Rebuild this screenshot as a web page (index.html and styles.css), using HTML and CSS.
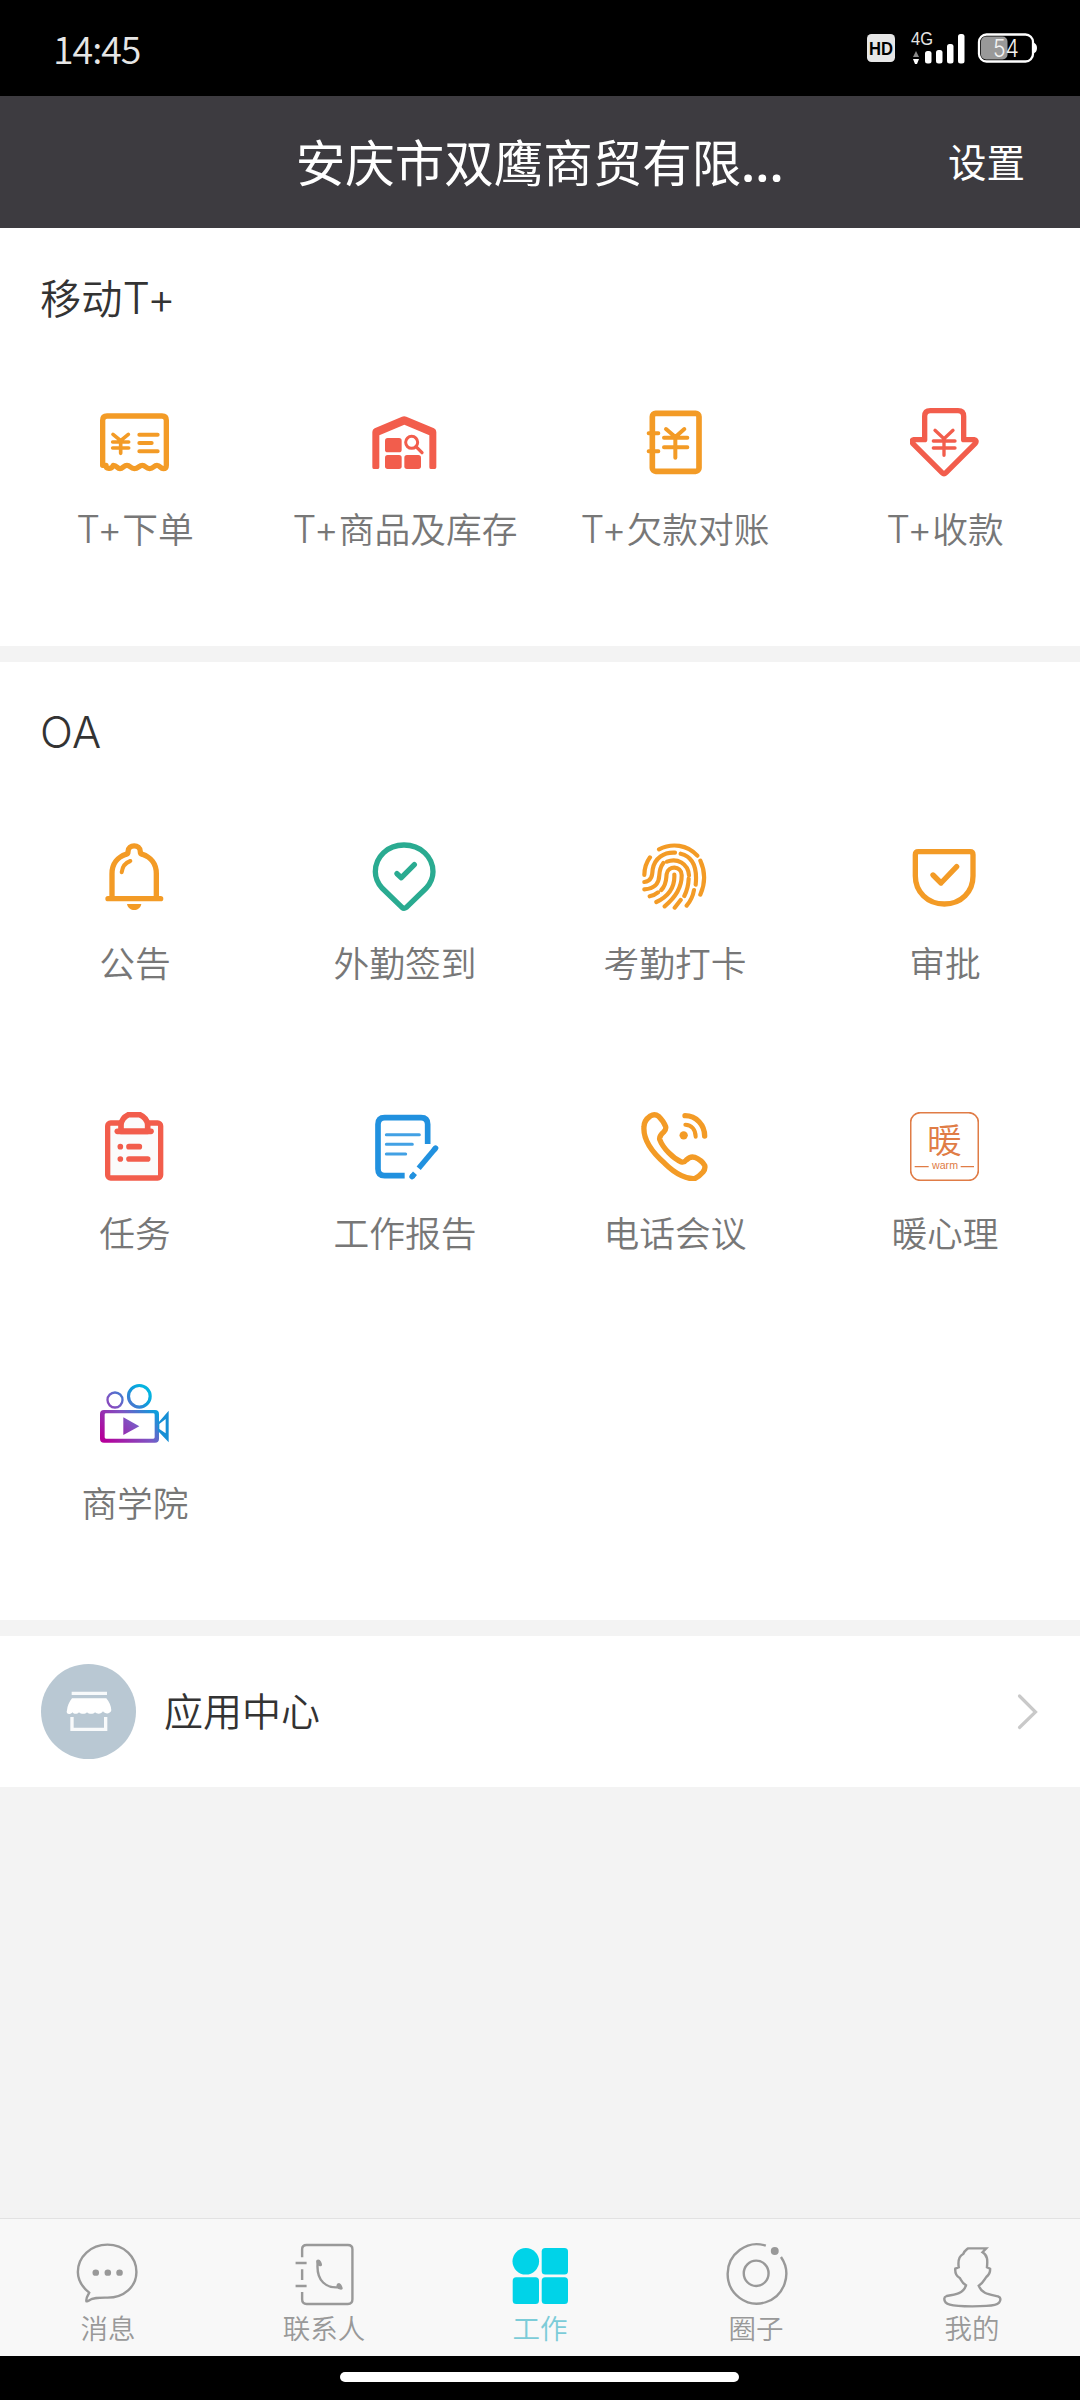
FILE: index.html
```html
<!DOCTYPE html>
<html lang="zh-CN">
<head>
<meta charset="utf-8">
<title>工作</title>
<link rel="stylesheet" href="styles.css">
</head>
<body>
<div class="status">
  <span class="time">14:45</span>
  <div class="status-icons">
    <svg class="hd" width="28" height="28" viewBox="0 0 28 28"><rect width="28" height="28" rx="4.500" fill="#e6e6e6"/><text x="14" y="21" text-anchor="middle" textLength="24" lengthAdjust="spacingAndGlyphs" class="hd-text">HD</text></svg>
    <svg class="signal" width="58" height="36" viewBox="0 0 58 36"><text x="2" y="15" textLength="22" lengthAdjust="spacingAndGlyphs" class="net-text">4G</text><path d="M4 27l3-6 3 6z" fill="#888"/><path d="M4 29h6l-2 5h-2z" fill="#fff"/><g fill="#fff"><rect x="16" y="21" width="6.500" height="12.500" rx="2.500"/><rect x="27" y="20" width="6.500" height="13.500" rx="2.500"/><rect x="38" y="14" width="6.500" height="19.500" rx="2.500"/><rect x="49" y="4" width="6.500" height="29.500" rx="2.500"/></g></svg>
    <svg width="64" height="32" viewBox="0 0 64 32"><rect x="5" y="4.500" width="26.500" height="23" rx="5" fill="#999"/><rect x="3" y="2.500" width="54" height="27" rx="7.500" fill="none" stroke="#fff" stroke-width="2.300"/><path d="M57 10.500q4 1 4 5.500t-4 5.500z" fill="#fff"/><text x="17" y="25" textLength="26" lengthAdjust="spacingAndGlyphs" class="bat-text">54</text></svg>
  </div>
</div>
<header class="header">
  <span></span>
  <h1>安庆市双鹰商贸有限<span class="dots">...</span></h1>
  <span class="settings">设置</span>
</header>

<main class="main">
<section class="group group-first">
  <h2>移动<span class="lat">T+</span></h2>
  <div class="grid">
    <div class="cell">
      <svg class="icon orange" viewBox="120 84 207 207"><path d="M128 256V121q0-13 13-13h165q13 0 13 13v135q0 10-9 10c-9 0-9-10-19-10s-10 10-22 10-12-10-22-10-12 10-24 10-12-10-22-10-12 10-21 10-9-10-20-10q-5 10-14 9-8 0-8-9z" stroke-width="16"/><path d="M159 163l23 19 23-19M182 182v38M158 186h48M158 204h48" stroke-width="11"/><path d="M238 164h55M238 189h37M238 214h55" stroke-width="12"/></svg>
      <p><span class="lat">T+</span>下单</p>
    </div>
    <div class="cell">
      <svg class="icon red" viewBox="931 84 207 207"><path d="M938 262V156q0-7 7-11l82-35q6-3 13 0l83 35q7 4 7 11v106q0 5-5 5h-12q-4 0-4-5v-96l-75-32-75 32v96q0 5-4 5h-13q-4 0-4-5z" class="solid"/><g class="solid"><rect x="976" y="174" width="50" height="43" rx="8"/><rect x="976" y="225" width="50" height="42" rx="8"/><rect x="1034" y="225" width="50" height="42" rx="8"/></g><circle cx="1056" cy="187" r="18" stroke-width="9"/><path d="M1069 200l18 18" stroke-width="10"/></svg>
      <p><span class="lat">T+</span>商品及库存</p>
    </div>
    <div class="cell">
      <svg class="icon orange" viewBox="241 84 207 207"><rect x="278" y="100" width="140" height="174" rx="10" stroke-width="17"/><path d="M267 160h29M267 214h29M319 147l28 24 27-24M347 172v61M313 173h70M313 202h70" stroke-width="12"/></svg>
      <p><span class="lat">T+</span>欠款对账</p>
    </div>
    <div class="cell">
      <svg class="icon red" viewBox="1051 84 207 207"><path d="M1095 179v-70q0-17 17-17h83q17 0 17 17v70h31q10 2 4 11l-88 88q-6 6-12 0l-88-88q-6-9 4-11z" stroke-width="16"/><path d="M1126 151l27 25 27-25M1153 178v48M1121 183h65M1121 204h65" stroke-width="10"/></svg>
      <p><span class="lat">T+</span>收款</p>
    </div>
  </div>
</section>

<section class="group">
  <h2><span class="lat">OA</span></h2>
  <div class="grid">
    <div class="cell">
      <svg class="icon orange" viewBox="211 456 207 207"><path d="M247 622v-71c0-30 18-50 42-58 4-1 6-4 6-8 0-23 37-23 37 0 0 4 2 7 6 8 24 8 42 28 42 58v71M235 626h158" stroke-width="16"/><path d="M276 547c2-17 12-29 26-34" stroke-width="12"/><path d="M292 642h43c-5 24-38 24-43 0z" class="solid"/></svg>
      <p>公告</p>
    </div>
    <div class="cell">
      <svg class="icon green" viewBox="1021 456 207 207"><path d="M1117 652l-60-58c-13-15-20-30-20-49 0-44 36-80 86-80s87 36 87 80c0 19-7 34-20 49l-60 58q-7 5-13 0z" stroke-width="16"/><path d="M1102 551l13 12 39-39" stroke-width="16"/></svg>
      <p>外勤签到</p>
    </div>
    <div class="cell">
      <svg class="icon orange" viewBox="241 96 207 207"><g stroke-width="12.500"><path d="M298 118c39-20 85-14 115 19M422 152c15 33 15 68 0 102M271 142c-13 18-17 33-17 53M254 216c22-2 24-20 25-38 6-34 34-52 67-50M363 131c38 9 50 45 45 93M403 240c-3 18-11 34-22 47M254 238c36-2 44-22 45-43q1-21 12-36M322 155c30-12 63 5 66 41M387 206q-1 28-13 52M270 259q14-3 25-12M305 240c17-18 14-36 16-48 4-26 44-26 45 3 1 38-18 67-51 94M344 194c2 38-20 66-54 82M363 270l-18 23"/></g></svg>
      <p>考勤打卡</p>
    </div>
    <div class="cell">
      <svg class="icon orange" viewBox="1051 96 207 207"><path d="M1076 125h155q9 0 9 9v64c0 47-35 84-86 84s-87-37-87-84v-64q0-9 9-9z" stroke-width="16"/><path d="M1120 195l24 24 47-49" stroke-width="16"/></svg>
      <p>审批</p>
    </div>
    <div class="cell">
      <svg class="icon red" viewBox="121 96 207 207"><rect x="144" y="129" width="159" height="165" rx="9" stroke-width="16" fill="#fbfbfb"/><path d="M184 154v-20q2-20 22-30h34q22 10 24 30v20z" stroke-width="17" fill="#fbfbfb"/><path d="M173 154h101" stroke-width="17"/><path d="M208 200h31M208 237h56" stroke-width="17"/><g class="solid"><circle cx="182" cy="200" r="8.500"/><circle cx="182" cy="237" r="8.500"/></g></svg>
      <p>任务</p>
    </div>
    <div class="cell">
      <svg class="icon blue" viewBox="931 96 207 207"><path d="M1104 192v-59q0-20-20-20h-109q-20 0-20 20v134q0 20 20 20h60" stroke-width="17" stroke-linecap="butt"/><path d="M980 164h99M980 193h78M980 222h58" stroke-width="9" opacity=".85"/><path d="M1128 204l-51 61" stroke-width="16" stroke-linecap="butt"/><path d="M1128 204l-4 5M1057 290l2-2" stroke-width="16"/><path d="M1057 290l9-10" stroke-width="16" stroke-linecap="butt"/></svg>
      <p>工作报告</p>
    </div>
    <div class="cell">
      <svg class="icon orange" viewBox="241 96 207 207"><path d="M253 140c0-15 9-25 19-32q13-8 25 1c11 11 17 19 21 31q2 8-6 16-14 12-12 22c10 27 40 57 65 68q9 2 15-6 12-12 25-8 20 8 30 24 3 10-5 20-12 14-25 20c-20 2-55-11-90-46-40-35-65-75-62-110z" stroke-width="16"/><path d="M376 107c34 0 59 28 59 61" stroke-width="16"/><path d="M377 134c18 0 31 15 31 36" stroke-width="12"/><circle cx="372" cy="166" r="12.500" class="solid"/></svg>
      <p>电话会议</p>
    </div>
    <div class="cell">
      <svg class="icon warm" viewBox="1051 96 207 207"><rect x="1053" y="98" width="203" height="203" rx="29" stroke-width="5"/><path d="M1065 260h42M1203 260h40" stroke-width="3.500" stroke-linecap="butt"/><text x="1154" y="220" text-anchor="middle" class="warm-han">暖</text><text x="1156" y="268" text-anchor="middle" textLength="78" lengthAdjust="spacingAndGlyphs" class="warm-lat">warm</text></svg>
      <p>暖心理</p>
    </div>
    <div class="cell">
      <svg class="icon film" viewBox="301 66 207 207"><defs><linearGradient id="film" gradientUnits="userSpaceOnUse" x1="315" y1="240" x2="455" y2="105"><stop offset="0" stop-color="#b5009a"/><stop offset=".5" stop-color="#7d56c4"/><stop offset=".85" stop-color="#0f9bdc"/><stop offset="1" stop-color="#04b4e0"/></linearGradient></defs><g fill="none" stroke="url(#film)"><circle cx="346" cy="120" r="22.500" stroke-width="7"/><circle cx="419" cy="109" r="32.500" stroke-width="9.500"/><path d="M313 150h153q12 0 12 12v74q0 12-12 12H313q-12 0-12-12v-74q0-12 12-12zm6 10q-4 0-4 4v68q0 4 4 4h142q4 0 4-4v-68q0-4-4-4z" fill="url(#film)" fill-rule="evenodd" stroke="none"/><path d="M371 172v53l48-26z" fill="url(#film)" stroke="none"/><path d="M507 152v95l-32-34v-24zm-9 25l-19 15v15l19 13z" fill="#168fd5" fill-rule="evenodd" stroke="none"/></g></svg>
      <p>商学院</p>
    </div>
  </div>
</section>

<section class="center">
  <svg width="95" height="95" viewBox="123 912 285 285"><circle cx="265.500" cy="1054.500" r="142.500" fill="#b9c8d3"/><path d="M215 995h106v10H215z" fill="#fff" opacity=".9"/><path d="M216 1015h103q14 17 15 36c-3 12-19 12-25 3-5 9-18 9-24 3-5 6-18 6-24 0-5 6-18 6-24 0-5 6-16 6-19 0-8 9-22 6-17-6q1-18 15-36z" fill="#fff"/><path d="M216 1071v37h101v-37" fill="none" stroke="#fff" stroke-width="10" opacity=".9"/></svg>
  <span class="center-title">应用中心</span>
  <svg class="chevron" width="24" height="40" viewBox="0 0 24 40"><path d="M2.500 4l16 16-16 15.500" fill="none" stroke="#c9c9c9" stroke-width="3.200" stroke-linecap="round"/></svg>
</section>
</main>

<nav class="tabs">
  <div class="tab">
    <svg viewBox="209 108 209 216" preserveAspectRatio="none"><path d="M251 304c-3-10 6-20 8-26-22-18-33-38-33-62 0-46 38-82 86-82s84 36 84 82c0 44-36 77-84 77-24 0-40-1-55 9q-3 3-6 2z"/><g class="dot"><circle cx="278" cy="218" r="9.500"/><circle cx="313" cy="218" r="9.500"/><circle cx="347" cy="218" r="9.500"/></g></svg>
    <p>消息</p>
  </div>
  <div class="tab">
    <svg viewBox="836 108 209 216" preserveAspectRatio="none"><path d="M877 172v-24q0-13 13-13h120q13 0 13 13v150q0 14-13 14H890q-13 0-13-14v-22M877 208v32M858 189h32M858 258h32M922 190c-4 52 24 78 68 71"/><path d="M919 180q8-4 13 5 5 10 1 13-6 3-11-3-7-7-3-15zM984 249q-9 1-7 11 3 8 13 9 7 0 4-7-4-12-10-13z" class="dot"/></svg>
    <p>联系人</p>
  </div>
  <div class="tab active">
    <svg viewBox="0 0 72 72"><circle cx="21.800" cy="25.300" r="13.300"/><rect x="37.700" y="12" width="26.300" height="26.600" rx="3.500"/><rect x="8.700" y="41.300" width="26.300" height="26.600" rx="3.500"/><rect x="37.700" y="41.300" width="26.300" height="26.600" rx="3.500"/></svg>
    <p>工作</p>
  </div>
  <div class="tab">
    <svg viewBox="523 108 209 216" preserveAspectRatio="none"><path d="M656 137a85 89 0 1 0 44 34"/><ellipse cx="628" cy="220" rx="36" ry="38"/><ellipse cx="682" cy="153" rx="11.500" ry="12" class="dot"/></svg>
    <p>圈子</p>
  </div>
  <div class="tab">
    <svg viewBox="1150 108 209 216" preserveAspectRatio="none"><path d="M1243 145h53l-11 12c15 9 15 23 13 45l9 4c1 11-5 20-11 25-5 6-8 17-22 26 9 25 30 26 56 32q7 3 7 8c0 18-17 22-82 22s-81-6-81-23q0-5 7-8c27-4 49-8 56-32-13-8-14-17-18-22-9-5-14-16-13-28l10-4c-2-15-3-32 13-40 4-11 10-13 14-17z"/></svg>
    <p>我的</p>
  </div>
</nav>
<div class="home"><div class="home-bar"></div></div>
</body>
</html>
```
FILE: styles.css
```css
* { box-sizing: border-box; }
body, h1, h2, p { margin: 0; font-weight: inherit; }
body {
  width: 1080px;
  height: 2400px;
  display: flex;
  flex-direction: column;
  background: #f3f3f3;
  font-family: "Noto Sans CJK SC", sans-serif;
  font-weight: 350;
  color: #333;
  overflow: hidden;
}
svg { display: block; flex: none; }

.status {
  height: 96px;
  background: #000;
  color: #e6e6e6;
  display: flex;
  justify-content: space-between;
  align-items: center;
  padding: 0 40px 0 53px;
}
.time { font-size: 37.5px; line-height: 96px; letter-spacing: -1px; }
.status-icons { display: flex; align-items: center; }
.hd { margin-right: 14px; }
.signal { margin-right: 9px; }
.hd-text { font: 700 19px "Liberation Sans", sans-serif; }
.net-text { font: 18px "Liberation Sans", sans-serif; fill: #e6e6e6; }
.bat-text { font: 300 24px Inter, sans-serif; fill: #f3f3f3; }

.header {
  height: 132px;
  background: #3d3b40;
  color: #fff;
  display: grid;
  grid-template-columns: 1fr auto 1fr;
  align-items: center;
  padding: 0 55px;
}
.header h1 { font-size: 49.5px; font-weight: 400; line-height: 72px; }
.dots { font-family: "Noto Sans", sans-serif; font-weight: 600; letter-spacing: 0.6px; }
.settings { justify-self: end; font-size: 38.5px; font-weight: 400; padding-bottom: 4px; }

.main { flex: 1; }
.lat { font-family: Inter, sans-serif; font-size: 1.05em; font-weight: 300; letter-spacing: 0.3px; }
.group { background: #fff; margin-bottom: 16px; }
.group h2 { height: 148px; line-height: 136px; padding-left: 40px; font-size: 41.25px; }
.grid { display: grid; grid-template-columns: repeat(4, 270px); grid-auto-rows: 270px; }
.cell { display: flex; flex-direction: column; align-items: center; padding-top: 32px; }
.cell p { margin-top: 24px; font-size: 35.75px; line-height: 54px; color: #777; white-space: nowrap; }

.icon { width: 69px; height: 69px; margin-right: 1px; fill: none; stroke: currentColor; stroke-linecap: round; stroke-linejoin: round; }
.icon .solid { fill: currentColor; stroke: none; }
.orange { color: #f39b26; }
.red { color: #f25d4c; }
.green { color: #2aab91; }
.blue { color: #2191df; }
.warm { color: #e07c46; }
.warm text { fill: currentColor; stroke: none; }
.warm-han { font: 350 104px "Noto Sans CJK SC", sans-serif; }
.warm-lat { font: 30px "Liberation Sans", sans-serif; }

.center {
  height: 151px;
  background: #fff;
  display: flex;
  align-items: center;
  padding: 0 39px 0 41px;
}
.center-title { margin-left: 28px; padding-bottom: 5px; font-size: 39px; flex: 1; }

.tabs {
  height: 138px;
  border-top: 1px solid #e2e2e2;
  background: #f8f8f8;
  display: grid;
  grid-template-columns: repeat(5, 216px);
}
.tab { display: flex; flex-direction: column; align-items: center; padding-top: 17px; color: #999; }
.tab svg { width: 72px; height: 72px; fill: none; stroke: #999; stroke-width: 7; }
.tab svg .dot { fill: #999; stroke: none; }
.tab p { font-size: 27.5px; line-height: 40px; margin-top: -1px; }
.active { color: #7cccd8; }
.tab.active svg { fill: #00d3e8; stroke: none; }

.home { height: 44px; background: #000; display: flex; justify-content: center; padding-top: 16px; }
.home-bar { width: 399px; height: 10px; margin-right: 1px; border-radius: 5px; background: #fff; }
```
